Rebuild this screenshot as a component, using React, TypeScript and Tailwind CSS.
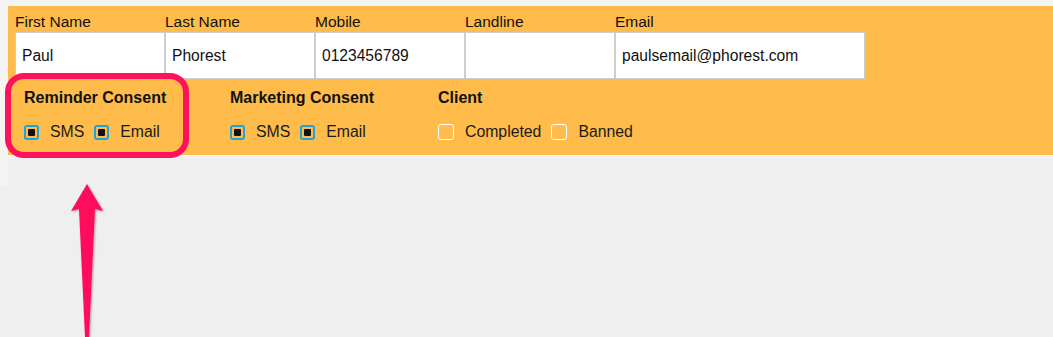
import React from "react";

const fields = [
  { label: "First Name", value: "Paul", w: "w-[150px]" },
  { label: "Last Name", value: "Phorest", w: "w-[150px]" },
  { label: "Mobile", value: "0123456789", w: "w-[150px]" },
  { label: "Landline", value: "", w: "w-[150px]" },
  { label: "Email", value: "paulsemail@phorest.com", w: "w-[250px]" },
];

function Check({ checked, label }: { checked: boolean; label: string }) {
  return (
    <div className="flex items-center">
      {checked ? (
        <span className="flex h-[15px] w-[15px] items-center justify-center rounded-[3px] border-2 border-[#1da3d8]">
          <span className="h-[7px] w-[7px] rounded-[1px] bg-[#111]" />
        </span>
      ) : (
        <span className="h-[16px] w-[16px] rounded-[3px] border-[1.5px] border-white" />
      )}
      <span className="ml-[11px] text-[15.8px] leading-[18px] text-[#1a1a1a]">{label}</span>
    </div>
  );
}

export default function App() {
  return (
    <div className="relative h-[337px] w-full overflow-hidden bg-[#efefef] font-['Liberation_Sans',Arial,sans-serif]">
      <div className="flex">
        <div className="h-[186px] w-[8px] shrink-0 bg-[#f4f4f4]" />
        <div className="flex-1">
          <div className="h-[6px] bg-[#f4f4f4]" />
          <div className="h-[149px] bg-[#ffbc4b] pl-[7px] pt-[7px]">
            <div className="flex">
              {fields.map((f) => (
                <div key={f.label} className={`${f.w} shrink-0`}>
                  <div className="h-[19px] text-[15.5px] leading-[18px] text-[#111]">{f.label}</div>
                  <div className="flex h-[47px] items-center border border-[#cdcdcd] bg-white px-[6px] text-[15.6px] text-[#111]">
                    {f.value}
                  </div>
                </div>
              ))}
            </div>
            <div className="ml-[9px] mt-[9px] flex">
              <div className="w-[206px]">
                <div className="text-[16px] font-bold leading-[20px] text-[#111]">Reminder Consent</div>
                <div className="mt-[15px] flex gap-[10px]">
                  <Check checked label="SMS" />
                  <Check checked label="Email" />
                </div>
              </div>
              <div className="w-[208px]">
                <div className="text-[16px] font-bold leading-[20px] text-[#111]">Marketing Consent</div>
                <div className="mt-[15px] flex gap-[10px]">
                  <Check checked label="SMS" />
                  <Check checked label="Email" />
                </div>
              </div>
              <div>
                <div className="text-[16px] font-bold leading-[20px] text-[#111]">Client</div>
                <div className="mt-[15px] flex gap-[10px]">
                  <Check checked={false} label="Completed" />
                  <Check checked={false} label="Banned" />
                </div>
              </div>
            </div>
          </div>
          <div className="h-[3px] bg-[#f4f4f4]" />
        </div>
      </div>

      {/* annotation */}
      <div className="absolute left-[5px] top-[73px] h-[85px] w-[184px] rounded-[19px] border-[6px] border-[#ff115c]" />
      <svg className="absolute left-0 top-0" width="200" height="337" viewBox="0 0 200 337">
        <defs>
          <filter id="sh" x="-50%" y="-10%" width="200%" height="120%">
            <feDropShadow dx="1" dy="1" stdDeviation="1" floodColor="#000" floodOpacity="0.35" />
          </filter>
        </defs>
        <polygon
          points="87,184 103,211 95,209 89,337 85,337 79,209 71,211"
          fill="#ff115c"
          filter="url(#sh)"
        />
      </svg>
    </div>
  );
}
